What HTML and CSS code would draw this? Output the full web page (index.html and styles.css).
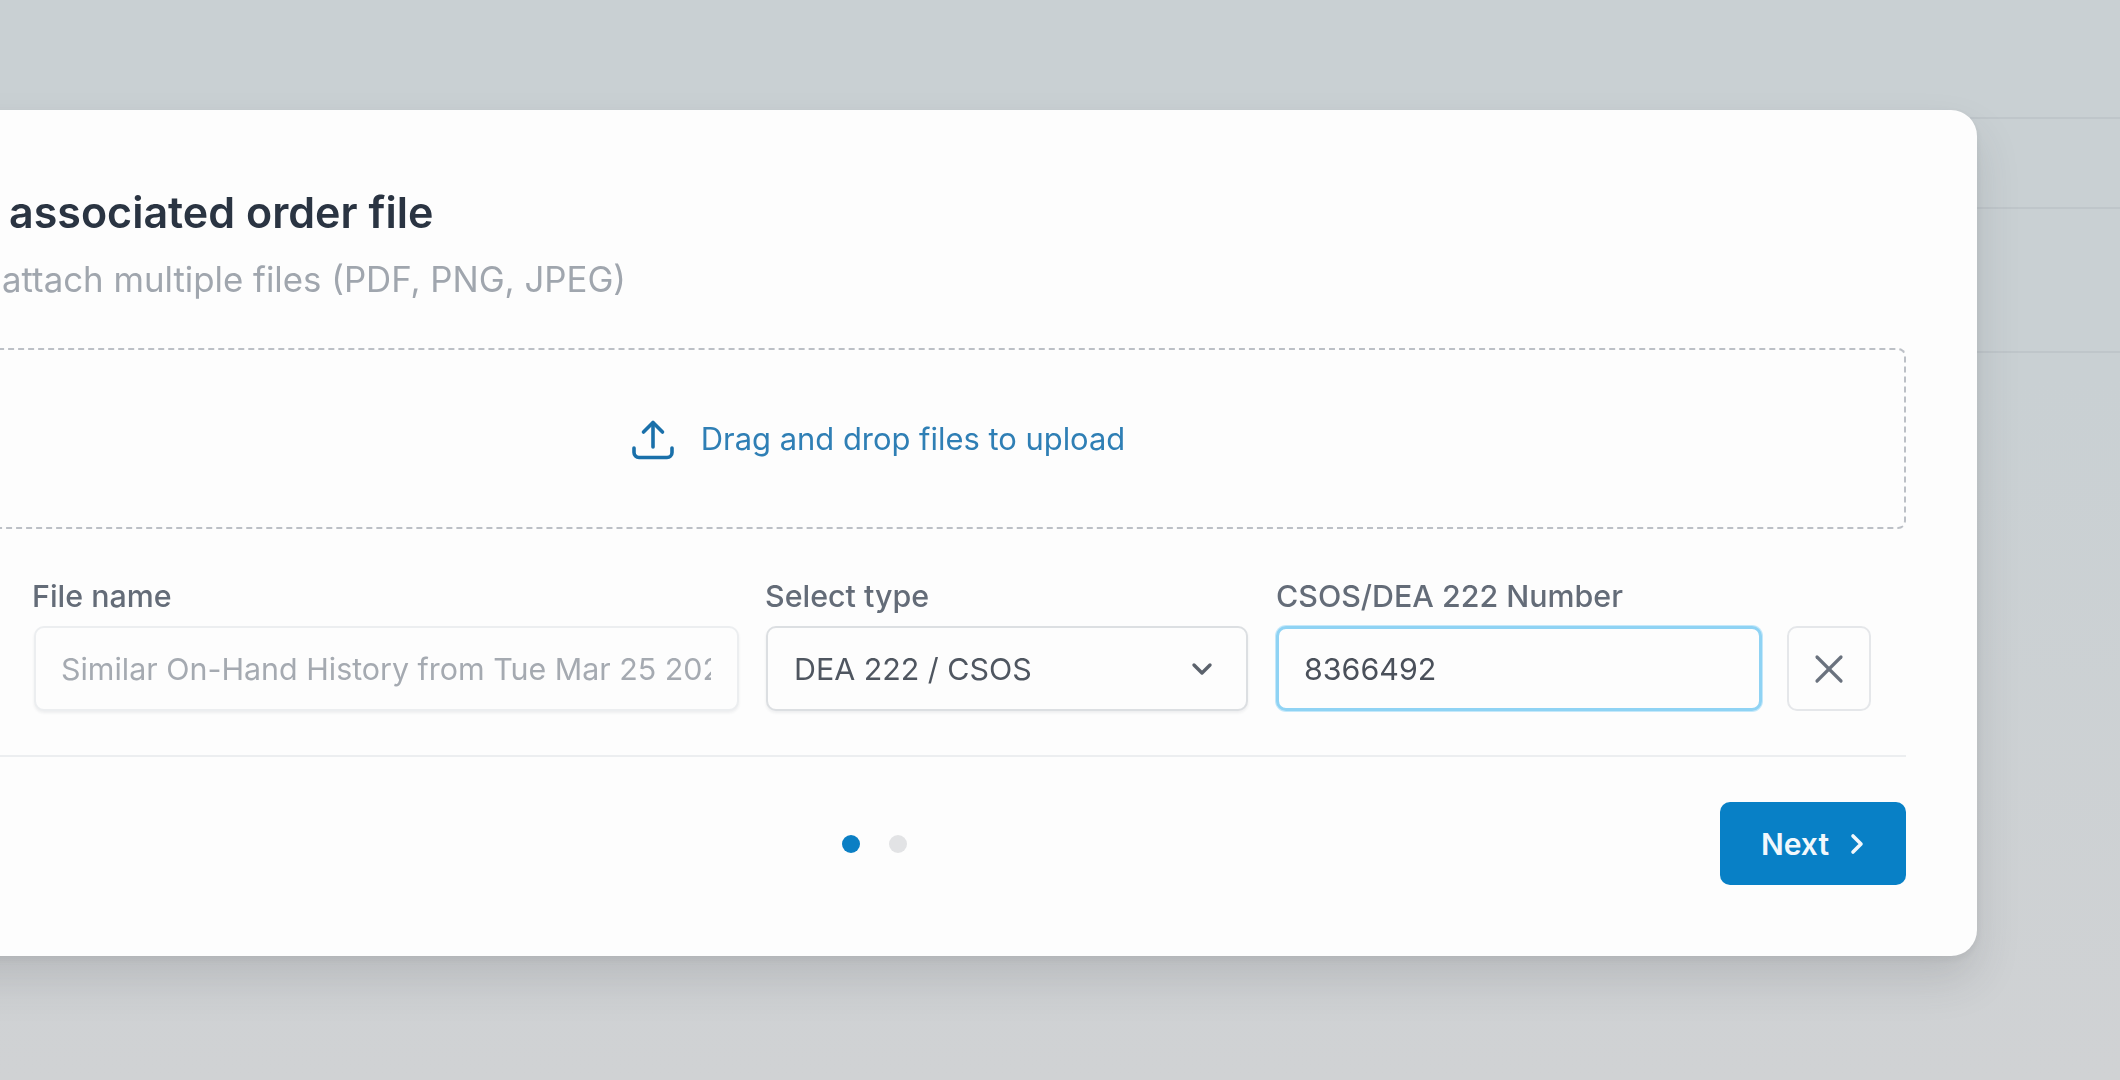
FILE: index.html
```html
<!DOCTYPE html>
<html>
<head>
<meta charset="UTF-8">
<title>Upload order file</title>
<link rel="stylesheet" href="styles.css">
</head>
<body>

<!-- page behind the modal -->
<div class="page">
	<div class="pageRow headRow"></div>
	<div class="pageRow midRow"></div>
	<div class="pageRow tallRow"></div>
</div>

<div class="modal">
	<h2 class="title">associated order file</h2>
	<p class="subtitle">attach multiple files (PDF, PNG, JPEG)</p>

	<div class="dropzone">
		<svg class="uploadIcon" viewBox="0 0 44 44" fill="none" stroke="currentColor" stroke-width="3.6" stroke-linecap="round" stroke-linejoin="round">
			<path d="M22 30V6"/>
			<path d="M12.5 15L22 5.5L31.5 15"/>
			<path d="M3 31v4.500a5 5 0 0 0 5 5h28a5 5 0 0 0 5-5V31"/>
		</svg>
		<span class="dropText">Drag and drop files to upload</span>
	</div>

	<div class="fileRow">
		<div class="field nameField">
			<label class="fieldLabel">File name</label>
			<input class="box nameInput" type="text" disabled value="Similar On-Hand History from Tue Mar 25 2025">
		</div>
		<div class="field typeField">
			<label class="fieldLabel">Select type</label>
			<div class="box selectBox">
				<span>DEA 222 / CSOS</span>
				<svg class="chevron" viewBox="0 0 24 24" fill="none" stroke="currentColor" stroke-width="3.4" stroke-linecap="round" stroke-linejoin="round"><path d="M4 8l8 8 8-8"/></svg>
			</div>
		</div>
		<div class="field numberField">
			<label class="fieldLabel">CSOS/DEA 222 Number</label>
			<input class="box numberInput" type="text" value="8366492">
		</div>
		<button class="removeBtn" type="button">
			<svg viewBox="0 0 30 30" fill="none" stroke="currentColor" stroke-width="3.2" stroke-linecap="round"><path d="M3 3l24 24"/><path d="M27 3L3 27"/></svg>
		</button>
	</div>

	<div class="footer">
		<div class="dots">
			<span class="dot active"></span>
			<span class="dot"></span>
		</div>
		<button class="nextBtn" type="button">
			Next
			<svg viewBox="0 0 16 24" fill="none" stroke="currentColor" stroke-width="3.6" stroke-linecap="round" stroke-linejoin="round"><path d="M4 4l8 8-8 8"/></svg>
		</button>
	</div>
</div>

</body>
</html>
```

FILE: styles.css
```css
* {box-sizing: border-box;}

html, body {
	margin: 0;
	height: 100%;
}

body {
	position: relative;
	overflow: hidden;
	font-family: Inter, "Liberation Sans", sans-serif;
	background: linear-gradient(#c9d0d3 0%, #c9d0d3 35%, #d0d2d4 100%);
}

/* rows of the page behind */
.page {display: flex; flex-direction: column;}
.pageRow {border-bottom: 2px solid #bfc6ca;}
.headRow {height: 119px;}
.midRow {height: 90px;}
.tallRow {height: 144px;}

.modal {
	position: absolute;
	left: -190px;
	top: 110px;
	width: 2167px;
	height: 846px;
	padding: 80px 71px 0 190px;
	background: #fdfdfd;
	border-radius: 26px;
	box-shadow: 0 24px 44px rgba(60, 60, 70, 0.15), 0 3px 8px rgba(60, 60, 70, 0.08);
	filter: blur(0.7px);
}

.title {
	margin: 0 0 0 9px;
	font-size: 43px;
	line-height: 44px;
	font-weight: 600;
	color: #2a3442;
}

.subtitle {
	margin: 27px 0 0 2px;
	font-size: 34.8px;
	line-height: 36px;
	color: #a0a6ae;
}

.dropzone {
	display: flex;
	align-items: center;
	justify-content: center;
	gap: 26px;
	height: 181px;
	margin-top: 51px;
	margin-left: -150px;
	border: 2px dashed #bcc0c6;
	border-radius: 8px;
	color: #2f7fb5;
	font-size: 30.9px;
}

.uploadIcon {width: 44px; height: 44px; color: #1a70aa;}

.fileRow {
	display: flex;
	align-items: flex-end;
	margin-top: 51px;
	padding-left: 34px;
	padding-bottom: 44px;
	border-bottom: 2px solid #eceef0;
}

.field {display: flex; flex-direction: column; gap: 14px;}
.nameField {width: 705px; margin-right: 27px;}
.typeField {width: 482px; margin-right: 28px;}
.numberField {width: 486px; margin-right: 25px;}

.fieldLabel {
	font-size: 30.4px;
	line-height: 32px;
	font-weight: 500;
	color: #646c78;
}

.nameField .fieldLabel {margin-left: -2px;}
.typeField .fieldLabel {margin-left: -1px;}

.box {
	height: 85px;
	width: 100%;
	border-radius: 10px;
	border: 2px solid #dcdfe3;
	background: #fdfdfd;
	font-family: inherit;
	font-size: 30.4px;
	padding: 0 26px;
	outline: none;
	box-shadow: 0 2px 3px rgba(30, 40, 60, 0.07);
}

.nameInput {color: #a5aab1; border-color: #eceef0; padding-left: 25px;}
.numberInput {color: #4a505a; border: 3px solid #8fd3f4; box-shadow: 0 0 0 1px #c4e8fa; padding-left: 25px;}

.selectBox {
	display: flex;
	align-items: center;
	justify-content: space-between;
	color: #4f5660;
	border-color: #dcdfe2;
	padding-right: 32px;
}

.chevron {width: 24px; height: 24px; color: #5b626c;}

.removeBtn {
	display: flex;
	align-items: center;
	justify-content: center;
	width: 84px;
	height: 85px;
	padding: 0;
	border: 2px solid #e5e7ea;
	border-radius: 10px;
	background: #fdfdfd;
	color: #6a727e;
}

.removeBtn svg {width: 30px; height: 30px;}

.footer {
	display: flex;
	align-items: center;
	justify-content: space-between;
	margin-top: 45px;
}

.dots {display: flex; gap: 29px; margin-left: 842px;}
.dot {width: 18px; height: 18px; border-radius: 50%; background: #e2e3e5;}
.dot.active {background: #0b7fc4;}

.nextBtn {
	display: flex;
	align-items: center;
	justify-content: center;
	gap: 20px;
	width: 186px;
	height: 83px;
	border: none;
	border-radius: 10px;
	background: #0880c6;
	color: #f2f8fc;
	font-family: inherit;
	font-size: 30px;
	font-weight: 600;
}

.nextBtn svg {width: 16px; height: 24px;}
```
